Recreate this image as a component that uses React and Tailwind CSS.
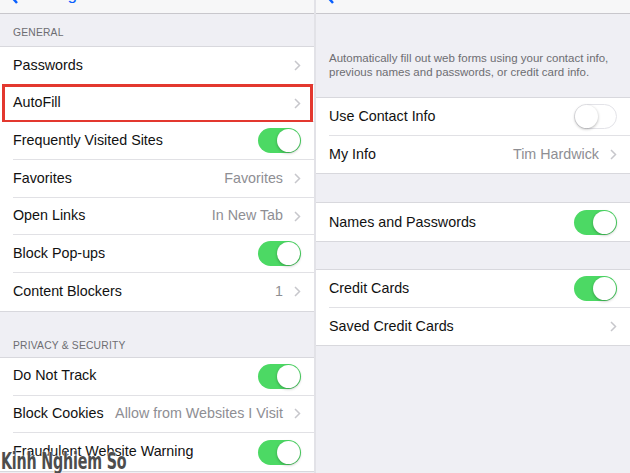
import React from 'react';

const font = { fontFamily: '"Liberation Sans", Arial, sans-serif' };

function Chevron() {
  return (
    <svg width="7" height="11" viewBox="0 0 7 11" className="ml-[11px] shrink-0">
      <path d="M1 1l4.5 4.5L1 10" fill="none" stroke="#c7c7cc" strokeWidth="1.5" />
    </svg>
  );
}

function Toggle({ on }) {
  return on ? (
    <div className="flex h-[25px] w-[43px] items-center justify-end rounded-full bg-[#4cd964] pr-[1px]">
      <div className="h-[23px] w-[23px] rounded-full bg-white shadow-[0_1px_3px_rgba(0,0,0,0.3)]" />
    </div>
  ) : (
    <div className="flex h-[25px] w-[43px] items-center justify-start rounded-full border border-[#e3e3e8] bg-white">
      <div className="h-[23px] w-[23px] rounded-full bg-white shadow-[0_1px_3px_rgba(0,0,0,0.3)]" />
    </div>
  );
}

function Row({ label, value, toggle, chevron, last, highlight }) {
  return (
    <div className="relative flex h-[37.7px] items-stretch bg-white pl-[13px]">
      <div
        className={`flex flex-1 items-center pr-[13px] ${last ? '' : 'border-b border-[#e1e1e5]'}`}
      >
        <span className="flex-1 text-[14.3px] text-[#111]">{label}</span>
        {value && <span className="text-[14.3px] text-[#8e8e93]">{value}</span>}
        {chevron && <Chevron />}
        {toggle !== undefined && <Toggle on={toggle} />}
      </div>
      {highlight && (
        <div className="absolute top-[-1px] right-[1px] bottom-[-1px] left-[2px] border-[3px] border-[#e3382f]" />
      )}
    </div>
  );
}

function Group({ children }) {
  return <div className="border-y border-[#d8d8dd]">{children}</div>;
}

function NavBar({ back, title }) {
  return (
    <div className="h-[14px] overflow-hidden border-b border-[#c8c7cc] bg-[#f7f7f8]">
      <div className="-mt-[20px] flex h-[30px] items-center px-[8px]">
        <div className="flex items-center gap-[5px] text-[17px] text-[#0a60fe]">
          <svg width="11" height="18" viewBox="0 0 11 18">
            <path d="M9 1L2 9l7 8" fill="none" stroke="#0a60fe" strokeWidth="2.5" />
          </svg>
          <span>{back}</span>
        </div>
        <span className="ml-[70px] text-[17px] font-semibold text-[#111]">{title}</span>
      </div>
    </div>
  );
}

function Header({ children, className }) {
  return (
    <div className={`flex items-end px-[13px] text-[10.3px] tracking-[0.2px] text-[#6d6d72] ${className}`}>
      {children}
    </div>
  );
}

export default function App() {
  return (
    <div className="relative flex h-[473px] w-[630px] overflow-hidden bg-[#efeff4]" style={font}>
      <div className="flex w-[314px] flex-col">
        <NavBar back="Settings" title="Safari" />
        <Header className="h-[32px] pb-[6px]">GENERAL</Header>
        <Group>
          <Row label="Passwords" chevron />
          <Row label="AutoFill" chevron highlight />
          <Row label="Frequently Visited Sites" toggle={true} />
          <Row label="Favorites" value="Favorites" chevron />
          <Row label="Open Links" value="In New Tab" chevron />
          <Row label="Block Pop-ups" toggle={true} />
          <Row label="Content Blockers" value="1" chevron last />
        </Group>
        <Header className="h-[45px] pb-[3px]">PRIVACY &amp; SECURITY</Header>
        <Group>
          <Row label="Do Not Track" toggle={true} />
          <Row label="Block Cookies" value="Allow from Websites I Visit" chevron />
          <Row label="Fraudulent Website Warning" toggle={true} last />
        </Group>
      </div>
      <div className="w-[2px] bg-[#e2e2e7]" />
      <div className="flex flex-1 flex-col">
        <NavBar back="Safari" title="AutoFill" />
        <div className="flex h-[83px] flex-col justify-end px-[13px] pb-[18px] text-[11.5px] leading-[14px] text-[#6d6d72]">
          <p>Automatically fill out web forms using your contact info,</p>
          <p>previous names and passwords, or credit card info.</p>
        </div>
        <Group>
          <Row label="Use Contact Info" toggle={false} />
          <Row label="My Info" value="Tim Hardwick" chevron last />
        </Group>
        <div className="h-[28px]" />
        <Group>
          <Row label="Names and Passwords" toggle={true} last />
        </Group>
        <div className="h-[27px]" />
        <Group>
          <Row label="Credit Cards" toggle={true} />
          <Row label="Saved Credit Cards" chevron last />
        </Group>
      </div>
      <div
        className="absolute bottom-[0px] left-[1px] origin-left scale-x-[0.62] text-[23px] font-bold leading-[24px] tracking-[-0.3px] whitespace-nowrap text-[#4d4d4d] [text-shadow:0_0_2px_#fff,0_0_2px_#fff]"
        style={{ fontFamily: '"DejaVu Sans", sans-serif' }}
      >
        Kinh Nghiem So
      </div>
    </div>
  );
}
